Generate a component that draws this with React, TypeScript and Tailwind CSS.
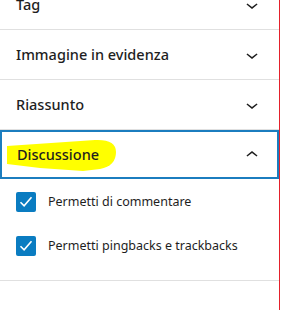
import { useState } from 'react';

const panels = ['Tag', 'Immagine in evidenza', 'Riassunto'];

function ChevronDown() {
  return (
    <svg viewBox="0 0 24 24" className="w-6 h-6 fill-[#1e1e1e]">
      <path d="M17.5 11.6L12 16l-5.5-4.4.9-1.2L12 14l4.6-3.6 1 1.2z" />
    </svg>
  );
}

function ChevronUp() {
  return (
    <svg viewBox="0 0 24 24" className="w-6 h-6 fill-[#1e1e1e]">
      <path d="M6.5 12.4L12 8l5.5 4.4-.9 1.2L12 10l-4.6 3.6-1-1.2z" />
    </svg>
  );
}

function Check({ label }: { label: string }) {
  const [on, setOn] = useState(true);
  return (
    <label className="flex items-center gap-3 cursor-pointer">
      <button
        type="button"
        onClick={() => setOn(!on)}
        className={`w-5 h-5 rounded-[2px] flex items-center justify-center ${on ? 'bg-[#0a7cc1]' : 'border border-[#1e1e1e] bg-white'}`}
      >
        {on && (
          <svg viewBox="0 0 20 20" className="w-5 h-5">
            <path d="M4.5 10.2l3.6 3.6 7.4-8.6" fill="none" stroke="white" strokeWidth="1.6" />
          </svg>
        )}
      </button>
      <span className="text-[12.5px] text-[#1e1e1e]">{label}</span>
    </label>
  );
}

export default function App() {
  return (
    <div className="w-[284px] h-[310px] overflow-hidden bg-white flex font-['Segoe_UI','Noto_Sans',sans-serif]">
      <div className="w-[279px] flex flex-col">
        {panels.map((p, i) => (
          <div key={p} className={`border-b border-[#e0e0e0] ${i === 0 ? '-mt-[20px]' : ''}`}>
            <div className="h-[49px] pl-4 pr-[15px] flex items-center justify-between">
              <span className="text-[14.5px] font-medium text-[#1e1e1e]">{p}</span>
              <ChevronDown />
            </div>
          </div>
        ))}
        <div className="border-b border-[#e0e0e0]">
          <div className="relative h-[49px] pl-4 pr-[15px] flex items-center justify-between border-2 border-[#1b7dbf]">
            <svg className="absolute left-0 top-0 w-[120px] h-[46px]" viewBox="0 0 120 46">
              <path d="M5 14 L93 8 Q114 7 114 20 Q114 34 98 37 L81 39 L38 36 L5 32 Z" fill="#ffff00" />
            </svg>
            <span className="relative text-[14.5px] font-medium text-[#1e1e1e] -ml-[1px]">Discussione</span>
            <span className="-mr-[2px]"><ChevronUp /></span>
          </div>
          <div className="pl-4 pt-[13px] pb-6 flex flex-col gap-6">
            <Check label="Permetti di commentare" />
            <Check label="Permetti pingbacks e trackbacks" />
          </div>
        </div>
      </div>
      <div className="w-px bg-[#e4212b]" />
    </div>
  );
}
